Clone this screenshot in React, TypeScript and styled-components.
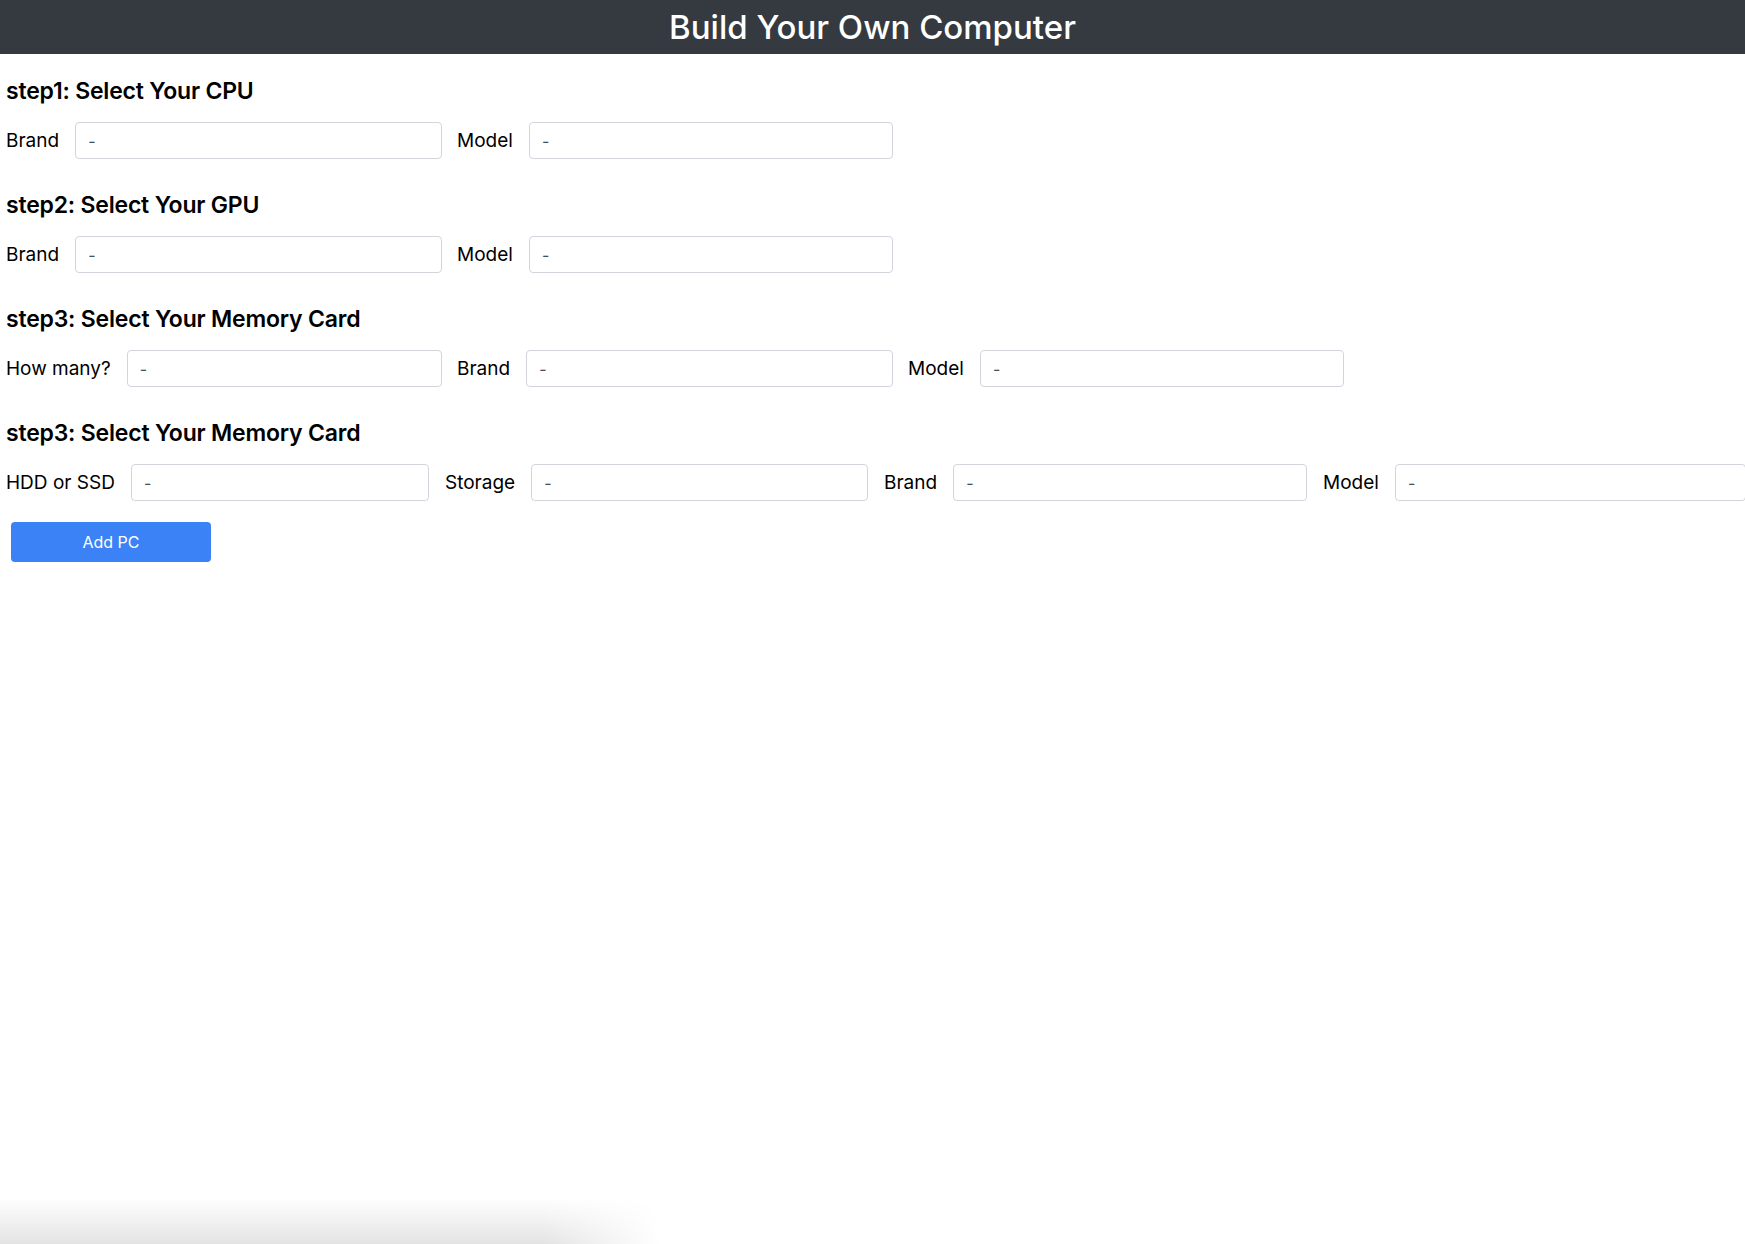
import React from "react";
import styled, { createGlobalStyle } from "styled-components";

const GlobalStyle = createGlobalStyle`
  html, body {
    margin: 0;
    padding: 0;
    background: #ffffff;
    overflow: hidden;
  }
  body {
    font-family: Inter, "Noto Sans", "Liberation Sans", sans-serif;
    color: #111111;
  }
  * { box-sizing: border-box; }
`;

const Page = styled.div`
  width: 1745px;
  min-height: 1244px;
  overflow: hidden;
`;

const Header = styled.header`
  height: 54px;
  background: #343a40;
  display: flex;
  align-items: center;
  justify-content: center;
`;

const Title = styled.h1`
  margin: 0;
  color: #ffffff;
  font-size: 33px;
  font-weight: 500;
  line-height: 38px;
`;

const Main = styled.main`
  padding: 20px 0 0 6px;
  display: flex;
  flex-direction: column;
`;

const Section = styled.section`
  display: flex;
  flex-direction: column;
  margin-bottom: 29px;
  &:last-of-type {
    margin-bottom: 21px;
  }
`;

const StepTitle = styled.h2`
  margin: 1px 0 15px 0;
  font-size: 23px;
  font-weight: 600;
  line-height: 32px;
  color: #000000;
  letter-spacing: -0.2px;
`;

const Row = styled.div<{ $gap: number }>`
  display: flex;
  align-items: center;
  gap: ${(p) => p.$gap}px;
  width: max-content;
`;

const Group = styled.div<{ $width: number }>`
  width: ${(p) => p.$width}px;
  flex: none;
  display: flex;
  align-items: center;
  gap: 16px;
`;

const Label = styled.label`
  font-size: 19px;
  line-height: 26px;
  color: #000000;
  white-space: nowrap;
`;

const Field = styled.input`
  flex: 1;
  min-width: 0;
  height: 37px;
  padding: 0 12px;
  border: 1px solid #d4d5dc;
  border-radius: 4px;
  background: #ffffff;
  font-family: inherit;
  font-size: 16px;
  color: #495057;
  outline: none;
`;

const AddButton = styled.button`
  align-self: flex-start;
  margin-left: 5px;
  width: 200px;
  height: 40px;
  border: none;
  border-radius: 4px;
  background: #3b82f6;
  color: #ffffff;
  font-family: inherit;
  font-size: 16px;
  font-weight: 400;
  cursor: pointer;
`;

const ScrollShade = styled.div`
  position: fixed;
  left: 0;
  bottom: 0;
  width: 660px;
  height: 46px;
  pointer-events: none;
  background: linear-gradient(to bottom, rgba(0, 0, 0, 0), rgba(0, 0, 0, 0.11));
  -webkit-mask-image: linear-gradient(to right, #000 82%, transparent 100%);
  mask-image: linear-gradient(to right, #000 82%, transparent 100%);
`;

type Step = {
  title: string;
  groupWidth: number;
  gap: number;
  fields: string[];
};

const steps: Step[] = [
  { title: "step1: Select Your CPU", groupWidth: 436, gap: 15, fields: ["Brand", "Model"] },
  { title: "step2: Select Your GPU", groupWidth: 436, gap: 15, fields: ["Brand", "Model"] },
  {
    title: "step3: Select Your Memory Card",
    groupWidth: 436,
    gap: 15,
    fields: ["How many?", "Brand", "Model"],
  },
  {
    title: "step3: Select Your Memory Card",
    groupWidth: 423,
    gap: 16,
    fields: ["HDD or SSD", "Storage", "Brand", "Model"],
  },
];

export default function App() {
  return (
    <>
      <GlobalStyle />
      <Page>
        <Header>
          <Title>Build Your Own Computer</Title>
        </Header>
        <Main>
          {steps.map((step, si) => (
            <Section key={si}>
              <StepTitle>{step.title}</StepTitle>
              <Row $gap={step.gap}>
                {step.fields.map((f, fi) => (
                  <Group key={fi} $width={step.groupWidth}>
                    <Label>{f}</Label>
                    <Field readOnly value="-" />
                  </Group>
                ))}
              </Row>
            </Section>
          ))}
          <AddButton>Add PC</AddButton>
        </Main>
        <ScrollShade />
      </Page>
    </>
  );
}
